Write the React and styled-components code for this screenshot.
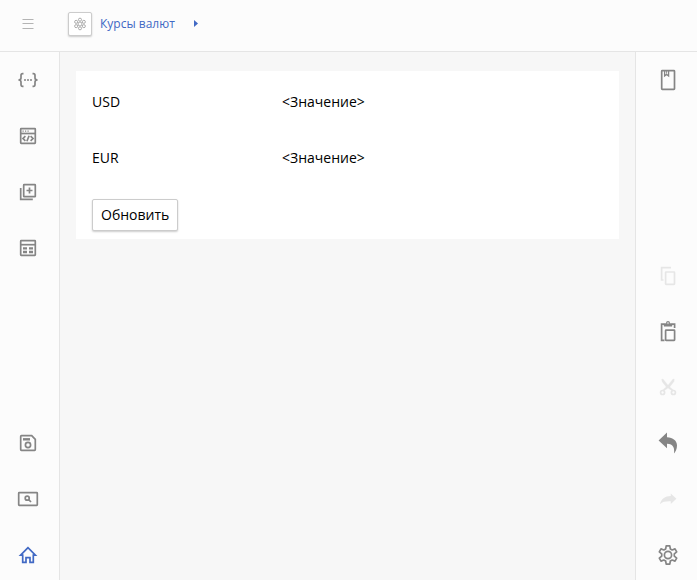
import React from 'react';
import styled, { createGlobalStyle } from 'styled-components';

const GlobalStyle = createGlobalStyle`
  * {
    box-sizing: border-box;
  }
  body {
    margin: 0;
    background: #f7f7f7;
    color: #000;
    font-family: 'Open Sans', 'Noto Sans', sans-serif;
    font-size: 14px;
    line-height: 20px;
  }
  button {
    font: inherit;
    color: inherit;
    cursor: pointer;
  }
  button:disabled {
    cursor: default;
  }
`;

const icons = {
  menu: <path d="M6.5 7.5h11M6.5 11.5h11M6.5 16.5h11" strokeWidth="1" />,
  braces: (
    <>
      <path d="M7.5 5.7H6.6Q5 5.7 5 7.4V10Q5 12 2.4 12Q5 12 5 14V16.6Q5 18.3 6.6 18.3H7.5" />
      <path d="M16.5 5.7h.9Q19 5.7 19 7.4V10Q19 12 21.6 12Q19 12 19 14v2.6q0 1.7-1.6 1.7h-.9" />
      <path d="M8 12h2M11 12h2M14 12h2" strokeWidth="1.3" />
    </>
  ),
  code: (
    <>
      <rect x="4.7" y="4.7" width="14.6" height="14.6" rx="0.5" />
      <path d="M4.7 9.5h14.6" />
      <path d="M6.5 7.2h1.2M9 7.2h1.2M11.5 7.2h1.2" strokeWidth="1.2" />
      <path d="M9.4 12.2L7 14.5l2.4 2.3M14.6 12.2l2.4 2.3-2.4 2.3M13.1 11.8l-2.2 5.4" />
    </>
  ),
  add: (
    <>
      <rect x="7.7" y="4.7" width="11.6" height="12" rx="0.5" />
      <path d="M4.7 8v11.3h12.1" />
      <path d="M13.5 7.5v6M10.5 10.5h6" />
    </>
  ),
  table: (
    <>
      <rect x="4.7" y="4.7" width="14.6" height="14.6" rx="0.5" />
      <path d="M4.7 8.7h14.6" />
      <path d="M7 12.3h4M13 12.3h4M7 16h4M13 16h4" strokeWidth="2.3" />
    </>
  ),
  save: (
    <>
      <path d="M5.4 4.7H15.7L19.3 8.3V18.6q0 .7-.7.7H5.4q-.7 0-.7-.7V5.4q0-.7.7-.7z" />
      <path d="M7 8.3h7" strokeWidth="2.4" />
      <circle cx="12" cy="14" r="2.6" />
    </>
  ),
  preview: (
    <>
      <rect x="2.7" y="5.7" width="18.6" height="12.6" rx="0.6" />
      <circle cx="11.2" cy="11.2" r="2" />
      <path d="M12.7 12.7l2.3 2.3" />
    </>
  ),
  home: <path d="M12 4.7L4.6 12.2H6.7V19.3H10V14.7h4v4.6h3.3v-7.1h2.1z" />,
  book: (
    <>
      <rect x="5.7" y="2.7" width="12.8" height="18.6" rx="0.6" />
      <path d="M8.6 3v5l2-1.6 2 1.6V3" strokeWidth="1.3" />
      <path d="M10.6 3v2.6" strokeWidth="0.9" />
    </>
  ),
  copy: (
    <>
      <path d="M15 4.6H5.6V17H7.5" />
      <rect x="9.6" y="9" width="8.9" height="12.3" rx="0.5" />
    </>
  ),
  paste: (
    <>
      <path d="M8.5 21.3H5.6V5.2H8M16 5.2h2.6V9" />
      <path d="M8 4.6h2.5a1.6 1.6 0 0 1 3.1 0H16v2.6H8z" fill="currentColor" strokeWidth="0.5" />
      <circle cx="12" cy="4" r="1.4" fill="#fcfcfc" strokeWidth="1.2" />
      <rect x="9.6" y="11.2" width="9" height="10.1" rx="0.5" />
    </>
  ),
  cut: (
    <>
      <path d="M5.7 4.2L7 4l5 6.2L17 4l1.3.2-.3 2.3-4.2 5.4 3.6 3.1-1.2 1.1-4.2-3.2-4.2 3.2-1.2-1.1 3.6-3.1L6 6.5z" fill="currentColor" strokeWidth="0.3" />
      <circle cx="6.6" cy="17.5" r="2" />
      <circle cx="17.4" cy="17.5" r="2" />
    </>
  ),
  undo: (
    <path
      d="M2.6 9.4L11 1.4V6.2C17 6.5 21 9.5 21 14.5C21 18 19.5 21 18 22.5C18.7 17 17.5 12.9 11 12.7V17.2z"
      fill="currentColor"
      stroke="none"
    />
  ),
  redo: (
    <path
      d="M20.4 11.7L14.8 6.4V9C9 9.1 5 12 4 17.2C6.5 14.6 9.4 14.1 14.8 14.2V17z"
      fill="currentColor"
      stroke="none"
    />
  ),
  gear: (
    <>
      <path d="M10.2 2.9h3.6l.5 3 1.9 1.1 2.8-1.1 1.7 3-2.4 1.9v2.4l2.4 1.9-1.7 3-2.8-1.1-1.9 1.1-.5 3h-3.6l-.5-3-1.9-1.1-2.8 1.1-1.7-3 2.4-1.9v-2.4L3.3 8.9l1.7-3 2.8 1.1 1.9-1.1z" strokeLinejoin="round" />
      <circle cx="12" cy="12" r="3.6" />
    </>
  ),
  atom: (
    <>
      <circle cx="12" cy="12" r="3.4" />
      <circle cx="12" cy="4.6" r="2.6" />
      <circle cx="12" cy="19.4" r="2.6" />
      <circle cx="5.4" cy="8.3" r="2.6" />
      <circle cx="18.6" cy="8.3" r="2.6" />
      <circle cx="5.4" cy="15.7" r="2.6" />
      <circle cx="18.6" cy="15.7" r="2.6" />
    </>
  ),
};

const Icon = ({ name, size = 24 }) => (
  <IconStyled viewBox="0 0 24 24" width={size} height={size} aria-hidden="true">
    {icons[name]}
  </IconStyled>
);

const topTools = [
  { icon: 'braces', label: 'Переменные' },
  { icon: 'code', label: 'Код' },
  { icon: 'add', label: 'Добавить' },
  { icon: 'table', label: 'Таблица' },
];

const bottomTools = [
  { icon: 'save', label: 'Сохранить' },
  { icon: 'preview', label: 'Просмотр' },
  { icon: 'home', label: 'Домой', active: true },
];

const editTools = [
  { icon: 'copy', label: 'Копировать', disabled: true },
  { icon: 'paste', label: 'Вставить' },
  { icon: 'cut', label: 'Вырезать', disabled: true },
  { icon: 'undo', label: 'Отменить' },
  { icon: 'redo', label: 'Повторить', disabled: true },
  { icon: 'gear', label: 'Настройки' },
];

const rates = ['USD', 'EUR'];

const Tools = ({ items }) => (
  <ToolGroup>
    {items.map(({ icon, label, active, disabled }) => (
      <ToolButton key={icon} type="button" aria-label={label} $active={active} disabled={disabled}>
        <Icon name={icon} />
      </ToolButton>
    ))}
  </ToolGroup>
);

const App = () => (
  <>
    <GlobalStyle />
    <Layout>
      <Header>
        <MenuButton type="button" aria-label="Меню">
          <Icon name="menu" />
        </MenuButton>
        <Breadcrumbs>
          <FormButton type="button" aria-label="Форма">
            <Icon name="atom" size={14} />
          </FormButton>
          <Crumb href="#rates">Курсы валют</Crumb>
          <Arrow viewBox="0 0 4 7" width="4" height="7" aria-hidden="true">
            <path d="M0 0L4 3.5L0 7z" fill="currentColor" />
          </Arrow>
        </Breadcrumbs>
      </Header>
      <Workspace>
        <LeftRail>
          <Tools items={topTools} />
          <Tools items={bottomTools} />
        </LeftRail>
        <Canvas>
          <Panel>
            <Rates>
              {rates.map((code) => (
                <RateRow key={code}>
                  <dt>{code}</dt>
                  <dd>{'<Значение>'}</dd>
                </RateRow>
              ))}
            </Rates>
            <RefreshButton type="button">Обновить</RefreshButton>
          </Panel>
        </Canvas>
        <RightRail>
          <Tools items={[{ icon: 'book', label: 'Закладки' }]} />
          <Tools items={editTools} />
        </RightRail>
      </Workspace>
    </Layout>
  </>
);

const IconStyled = styled.svg`
  display: block;
  flex: none;
  fill: none;
  stroke: currentColor;
  stroke-width: 1.7;
`;

const Layout = styled.div`
  display: flex;
  flex-direction: column;
  min-height: 100vh;
`;

const Header = styled.header`
  display: flex;
  align-items: center;
  gap: 16px;
  height: 52px;
  padding: 0 4px 4px;
  background: #fcfcfc;
  border-bottom: 1px solid #e5e5e5;
`;

const MenuButton = styled.button`
  display: flex;
  align-items: center;
  justify-content: center;
  width: 48px;
  height: 40px;
  padding: 0;
  border: none;
  background: none;
  color: #b4b4b4;
`;

const Breadcrumbs = styled.nav`
  display: flex;
  align-items: center;
`;

const FormButton = styled.button`
  display: flex;
  align-items: center;
  justify-content: center;
  width: 24px;
  height: 24px;
  padding: 0;
  border: 1px solid #ccc;
  border-radius: 2px;
  background: #fff;
  box-shadow: 0 1px 2px rgba(0, 0, 0, 0.2);
  color: #aaa;
`;

const Crumb = styled.a`
  margin-left: 8px;
  color: #4169c4;
  font-size: 12px;
  text-decoration: none;
`;

const Arrow = styled.svg`
  margin-left: 19px;
  color: #4169c4;
`;

const Workspace = styled.div`
  display: flex;
  flex: 1;
`;

const Rail = styled.aside`
  display: flex;
  flex: none;
  flex-direction: column;
  justify-content: space-between;
  background: #fcfcfc;
`;

const LeftRail = styled(Rail)`
  padding: 4px 7px 1px 4px;
  border-right: 1px solid #e5e5e5;
`;

const RightRail = styled(Rail)`
  padding: 4px 5px 1px 8px;
  border-left: 1px solid #e5e5e5;
`;

const ToolGroup = styled.div`
  display: flex;
  flex-direction: column;
  gap: 8px;
`;

const ToolButton = styled.button`
  display: flex;
  align-items: center;
  justify-content: center;
  width: 48px;
  height: 48px;
  padding: 0;
  border: none;
  background: none;
  color: ${({ $active }) => ($active ? '#4169c4' : '#858585')};
  &:disabled {
    color: #e6e6e6;
  }
`;

const Canvas = styled.main`
  flex: 1;
  min-width: 0;
  padding: 19px 16px;
`;

const Panel = styled.section`
  padding: 3px 16px 8px;
  background: #fff;
`;

const Rates = styled.dl`
  margin: 0 0 13px;
`;

const RateRow = styled.div`
  display: grid;
  grid-template-columns: 190px 1fr;
  align-items: center;
  height: 56px;
  dd {
    margin: 0;
  }
`;

const RefreshButton = styled.button`
  display: block;
  height: 32px;
  padding: 0 8px;
  border: 1px solid #ccc;
  border-radius: 2px;
  background: #fff;
  box-shadow: 0 1px 2px rgba(0, 0, 0, 0.2);
`;

export default App;
